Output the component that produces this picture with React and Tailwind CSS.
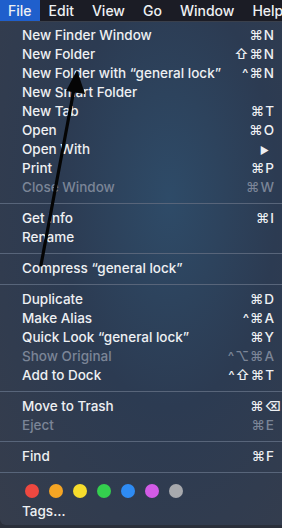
// Finder "File" menu, dark mode, with an annotation arrow on top

import React from "react";

const menuBar = ["File", "Edit", "View", "Go", "Window", "Help"];

const sections = [
  [
    { label: "New Finder Window", keys: "⌘N" },
    { label: "New Folder", keys: "⇧⌘N" },
    { label: "New Folder with “general lock”", keys: "^⌘N" },
    { label: "New Smart Folder" },
    { label: "New Tab", keys: "⌘T" },
    { label: "Open", keys: "⌘O" },
    { label: "Open With", keys: "▶", arrow: true },
    { label: "Print", keys: "⌘P" },
    { label: "Close Window", keys: "⌘W", disabled: true },
  ],
  [{ label: "Get Info", keys: "⌘I" }, { label: "Rename" }],
  [{ label: "Compress “general lock”" }],
  [
    { label: "Duplicate", keys: "⌘D" },
    { label: "Make Alias", keys: "^⌘A" },
    { label: "Quick Look “general lock”", keys: "⌘Y" },
    { label: "Show Original", keys: "^⌥⌘A", disabled: true },
    { label: "Add to Dock", keys: "^⇧⌘T" },
  ],
  [
    { label: "Move to Trash", keys: "⌘⌫", wide: true },
    { label: "Eject", keys: "⌘E", disabled: true },
  ],
  [{ label: "Find", keys: "⌘F" }],
];

const tagColors = [
  "bg-[#ee4840]",
  "bg-[#f5a524]",
  "bg-[#f6dc2c]",
  "bg-[#34cf4e]",
  "bg-[#2e8bf3]",
  "bg-[#d25be6]",
  "bg-[#a7a9ad]",
];

const Separator = () => (
  <div className="flex h-[12px] items-center">
    <div className="h-px w-full bg-[#58657a]" />
  </div>
);

const MenuRow = ({ item }) => (
  <div
    className={`flex h-[19px] items-center justify-between pl-[22px] ${
      item.wide ? "pr-0" : "pr-[7px]"
    } ${item.disabled ? "text-[#7b8597]" : "text-[#eef0f3]"}`}
  >
    <span>{item.label}</span>
    {item.keys && (
      <span
        className={`font-['Inter','DejaVu_Sans',sans-serif] ${
          item.arrow ? "pr-[6px] text-[10px]" : "tracking-[1px]"
        }`}
      >
        {item.keys}
      </span>
    )}
  </div>
);

export default function App() {
  return (
    <div className="relative h-[528px] w-[282px] overflow-hidden bg-[#2a2f3a] font-['Inter','DejaVu_Sans',sans-serif] text-[13.5px] font-medium leading-none">
      {/* Top menu bar */}
      <div className="flex h-[22px] items-center border-b border-[#3a404c] bg-[#1b1c25] text-[14px] text-[#eef0f3]">
        {menuBar.map((name, i) => (
          <span
            key={name}
            className={`flex h-full items-center px-[9px] ${
              i === 0 ? "bg-[#1f5fcc] pl-[8px] pr-[8px]" : ""
            }`}
          >
            {name}
          </span>
        ))}
      </div>

      {/* Dropdown panel */}
      <div className="h-[503px] rounded-bl-[6px] bg-[radial-gradient(ellipse_at_60%_35%,#2e4b68_0%,#2c3b52_45%,#363d4c_100%)] pt-[4px]">
        {sections.map((section, si) => (
          <div key={si}>
            {si > 0 && <Separator />}
            {section.map((item) => (
              <MenuRow key={item.label} item={item} />
            ))}
          </div>
        ))}
        <Separator />

        <div className="flex h-[25px] items-center gap-[10px] pl-[25px]">
          {tagColors.map((c) => (
            <span key={c} className={`h-[14px] w-[14px] rounded-full ${c}`} />
          ))}
        </div>
        <div className="flex h-[18px] items-center pl-[22px] text-[#eef0f3]">
          Tags…
        </div>
      </div>

      {/* Annotation arrow drawn over the menu */}
      <svg
        className="pointer-events-none absolute left-0 top-0"
        width="282"
        height="528"
        viewBox="0 0 282 528"
      >
        <line
          x1="41"
          y1="265"
          x2="75"
          y2="84"
          stroke="#050505"
          strokeWidth="3.2"
          strokeLinecap="round"
        />
        <polygon points="77,70 66,91 85,94" fill="#050505" />
      </svg>
    </div>
  );
}
